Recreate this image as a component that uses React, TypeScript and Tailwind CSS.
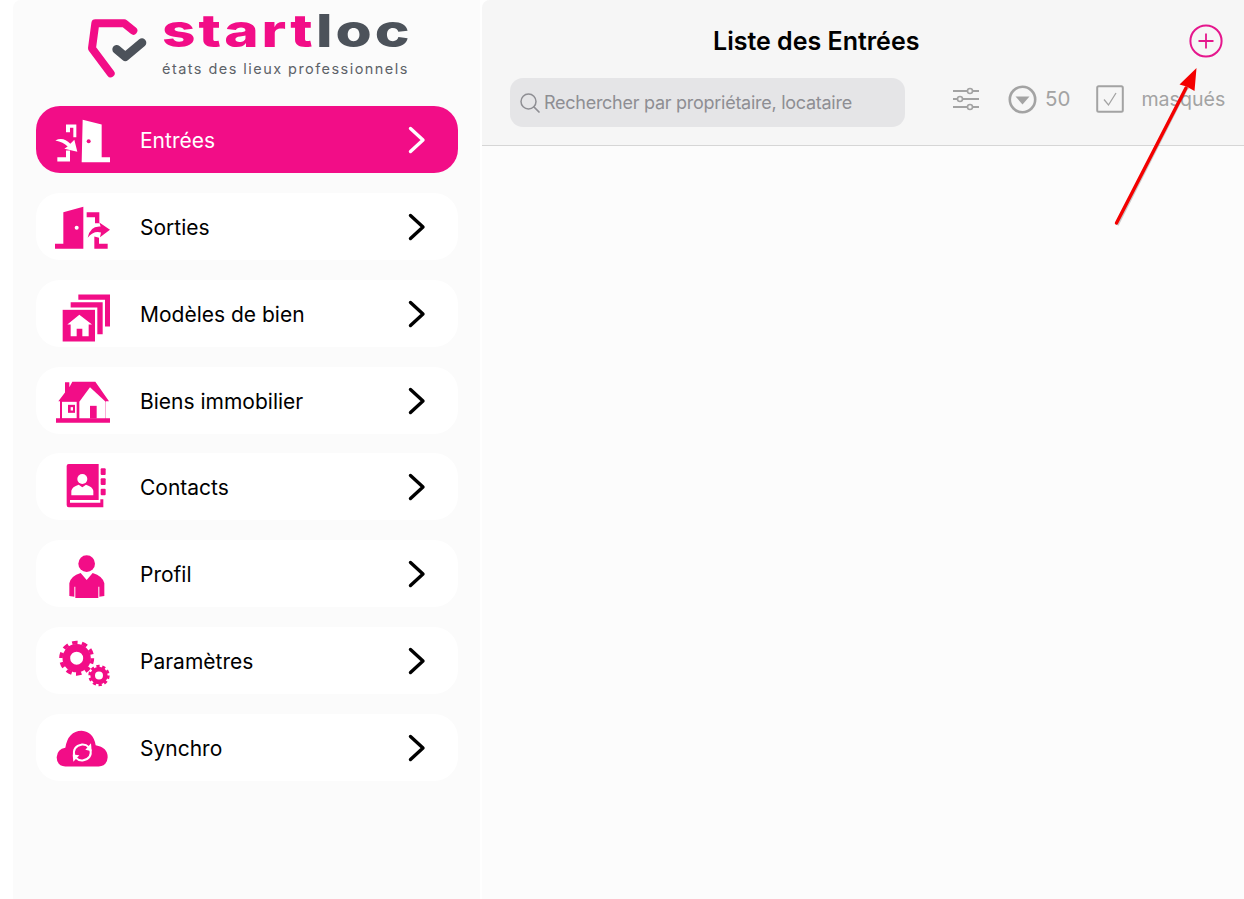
import React from "react";

const PINK = "#f20d87";

function Chevron({ color }: { color: string }) {
  return (
    <svg width="20" height="28" viewBox="0 0 20 28" fill="none" className="ml-auto mr-[31px] shrink-0">
      <path d="M3.5 2.5 L16 14 L3.5 25.5" stroke={color} strokeWidth="3.4" strokeLinecap="round" strokeLinejoin="round" />
    </svg>
  );
}

type IconProps = { cy: number; ox: number; oy: number; children: React.ReactNode };
function IconBox({ cy, ox, oy, children }: IconProps) {
  return (
    <svg width="60" height="60" viewBox={`52 ${cy - 30} 60 60`} className="shrink-0 ml-[16px] mr-[28px]">
      <g transform={`translate(${ox} ${oy}) scale(0.33333)`}>{children}</g>
    </svg>
  );
}

function EntreesIcon() {
  return (
    <IconBox cy={139.5} ox={0} oy={0}>
      <g fill="#fff">
        <path d="M248 358 L305 372 V470 H330 V485 H245 Z" />
        <path d="M198 372 H229 V410 H220 V382 H210 V395 H198 Z" />
        <path d="M172 470 H198 V450 H210 V483 H172 Z" />
        <path d="M166 420 Q190 408 211 430 L223 418 L232 454 L193 445 L203 438 Q190 425 166 420 Z" />
      </g>
      <circle cx="266" cy="422" r="6" fill={PINK} />
    </IconBox>
  );
}

function SortiesIcon() {
  return (
    <IconBox cy={226.5} ox={40} oy={190}>
      <g fill={PINK}>
        <path d="M70 65 L130 49 V175 H45 V160 H70 Z" />
        <path d="M140 65 H178 V98 H165 V80 H140 Z" />
        <path d="M163 138 L177 142 V160 H203 V175 H163 Z" />
        <path d="M143 142 Q150 105 182 108 L178 96 L210 118 L180 140 L183 126 Q160 120 143 142 Z" />
      </g>
      <circle cx="110" cy="112" r="6" fill="#fff" />
    </IconBox>
  );
}

function ModelesIcon() {
  return (
    <IconBox cy={313.5} ox={40} oy={190}>
      <g fill={PINK}>
        <path d="M115 312 H210 V408 H195 V328 H115 Z" />
        <path d="M92 335 H188 V431 H172 V351 H92 Z" />
        <rect x="68" y="358" width="97" height="95" />
      </g>
      <path d="M118 373 L156 402 H146 V437 H127 V415 H110 V437 H92 V402 H82 Z" fill="#fff" />
    </IconBox>
  );
}

function BiensIcon() {
  return (
    <IconBox cy={400.5} ox={40} oy={190}>
      <g fill={PINK}>
        <path d="M55 632 L75 606 V575 H88 V590 L97 574 H166 L207 632 H198 L198 683 H210 V697 H48 V683 H60 V632 Z" />
      </g>
      <path d="M66 634 H110 V683 H66 Z" fill="#fff" />
      <path d="M118 634 L150 590 L197 634 V683 H118 Z" fill="#fff" />
      <rect x="84" y="643" width="21" height="24" fill={PINK} />
      <rect x="92" y="650" width="7" height="10" fill="#fff" />
      <rect x="150" y="646" width="20" height="38" fill={PINK} />
    </IconBox>
  );
}

function ContactsIcon() {
  return (
    <IconBox cy={487} ox={40} oy={450}>
      <g fill={PINK}>
        <path d="M86 42 H176 V150 H90 V158 H181 V148 H190 V172 H86 Q80 172 80 165 V48 Q80 42 86 42 Z" />
        <rect x="182" y="55" width="15" height="20" rx="3" />
        <rect x="182" y="85" width="15" height="20" rx="3" />
        <rect x="182" y="116" width="15" height="20" rx="3" />
      </g>
      <circle cx="127" cy="87" r="15" fill="#fff" />
      <path d="M94 136 V122 Q96 110 116 104 L127 112 L138 104 Q158 110 160 122 V136 Z" fill="#fff" />
    </IconBox>
  );
}

function ProfilIcon() {
  return (
    <IconBox cy={574} ox={40} oy={540}>
      <g fill={PINK}>
        <circle cx="140" cy="71" r="25" />
        <path d="M88 168 V130 Q92 108 122 99 L140 120 L158 99 Q188 108 193 130 V168 L178 170 V140 H175 V174 H106 V140 H103 V170 Z" />
      </g>
    </IconBox>
  );
}

function GearsIcon() {
  return (
    <IconBox cy={660.5} ox={40} oy={450}>
      <g fill="none" stroke={PINK}>
        <circle cx="110" cy="623" r="31" strokeWidth="23" />
        <circle cx="110" cy="623" r="47" strokeWidth="11" strokeDasharray="16.4 13.1" />
        <circle cx="177" cy="675" r="19" strokeWidth="14" />
        <circle cx="177" cy="675" r="28" strokeWidth="8" strokeDasharray="9.8 7.8" />
      </g>
    </IconBox>
  );
}

function SynchroIcon() {
  return (
    <IconBox cy={747.5} ox={40} oy={450}>
      <path
        d="M76 948 Q50 946 50 920 Q52 896 76 892 Q84 842 125 841 Q160 844 167 884 Q203 890 203 920 Q202 946 176 948 Z"
        fill={PINK}
      />
      <g fill="none" stroke="#fff" strokeWidth="6">
        <path d="M103 916 Q96 888 126 882 Q138 881 146 890" />
        <path d="M151 896 Q158 924 128 930 Q116 931 108 922" />
      </g>
      <path d="M153 878 L155 902 L136 898 Z" fill="#fff" />
      <path d="M100 934 L98 912 L118 914 Z" fill="#fff" />
    </IconBox>
  );
}

const rows: { label: string; Icon: () => React.ReactElement; gap: string }[] = [
  { label: "Sorties", Icon: SortiesIcon, gap: "mt-[20px]" },
  { label: "Modèles de bien", Icon: ModelesIcon, gap: "mt-[20px]" },
  { label: "Biens immobilier", Icon: BiensIcon, gap: "mt-[20px]" },
  { label: "Contacts", Icon: ContactsIcon, gap: "mt-[19px]" },
  { label: "Profil", Icon: ProfilIcon, gap: "mt-[20px]" },
  { label: "Paramètres", Icon: GearsIcon, gap: "mt-[20px]" },
  { label: "Synchro", Icon: SynchroIcon, gap: "mt-[20px]" },
];

function Logo() {
  return (
    <div className="h-[106px] flex pl-[44px] pt-[10px]">
      <svg width="70" height="70" viewBox="80 10 70 70" className="shrink-0" fill="none">
        <g transform="translate(80 10) scale(0.33333)">
          <path d="M160 62 L133 40 H46 L36 115 L92 190" stroke={PINK} strokeWidth="24" strokeLinecap="round" strokeLinejoin="round" />
          <path d="M110 118 L136 140 L186 98" stroke="#4c525a" strokeWidth="26" strokeLinecap="round" strokeLinejoin="round" />
        </g>
      </svg>
      <div className="ml-[12px] flex flex-col font-['Inter',sans-serif]">
        <div className="text-[45px] leading-[44px] font-extrabold tracking-[2.3px] origin-left scale-x-[1.3] whitespace-nowrap -mt-[1px]">
          <span className="text-[#f20d87]">start</span>
          <span className="text-[#4c525a]">loc</span>
        </div>
        <div className="text-[14.5px] leading-[18px] text-[#5d6268] tracking-[1.45px] mt-[7px] whitespace-nowrap">
          états des lieux professionnels
        </div>
      </div>
    </div>
  );
}

export default function App() {
  return (
    <div className="w-[1244px] h-[899px] flex bg-white overflow-hidden relative font-['Inter',sans-serif]">
      <div className="w-[13px] shrink-0" />
      <aside className="w-[467px] shrink-0 bg-[#fbfbfb] rounded-tl-[8px] px-[23px]">
        <Logo />
        <div className="w-[422px]">
          <div className="h-[67px] rounded-[24px] bg-[#f20d87] flex items-center">
            <EntreesIcon />
            <span className="text-[21px] pt-[2px] text-white font-normal">Entrées</span>
            <Chevron color="#ffffff" />
          </div>
          {rows.map(({ label, Icon, gap }) => (
            <div key={label} className={`h-[67px] rounded-[24px] bg-white flex items-center ${gap}`}>
              <Icon />
              <span className="text-[21px] pt-[2px] text-black font-normal">{label}</span>
              <Chevron color="#000000" />
            </div>
          ))}
        </div>
      </aside>
      <div className="w-[2px] shrink-0" />
      <main className="flex-1 flex flex-col bg-[#fcfcfc] rounded-tl-[8px] overflow-hidden">
        <header className="h-[146px] shrink-0 bg-[#f6f6f6] border-b border-[#d6d6d6]">
          <div className="h-[78px] pt-[4px] flex items-center">
            <h1 className="ml-[231px] text-[25px] leading-[30px] font-semibold text-black whitespace-nowrap">Liste des Entrées</h1>
            <svg width="34" height="34" viewBox="0 0 34 34" fill="none" className="ml-auto mr-[21px]">
              <circle cx="17" cy="17" r="15.6" stroke="#e5178d" strokeWidth="2" />
              <path d="M17 9.5 V24.5 M9.5 17 H24.5" stroke="#e5178d" strokeWidth="1.8" />
            </svg>
          </div>
          <div className="flex items-center pl-[28px]">
            <div className="w-[395px] h-[49px] rounded-[13px] bg-[#e5e5e7] flex items-center pl-[9px]">
              <svg width="22" height="22" viewBox="0 0 22 22" fill="none" className="shrink-0">
                <circle cx="9.5" cy="9.5" r="7.5" stroke="#8e8e93" strokeWidth="1.5" />
                <path d="M15 15 L20 20" stroke="#8e8e93" strokeWidth="1.7" strokeLinecap="round" />
              </svg>
              <span className="ml-[3px] text-[18px] tracking-[-0.27px] text-[#8e8e93] whitespace-nowrap">Rechercher par propriétaire, locataire</span>
            </div>
            <div className="flex items-center mb-[7px] text-[#a3a3a3]">
              <svg width="26" height="24" viewBox="0 0 26 24" fill="none" className="ml-[48px]">
                <g stroke="#a3a3a3" strokeWidth="2">
                  <path d="M0 4 H26 M0 12 H26 M0 20 H26" />
                  <circle cx="17" cy="4" r="2.5" fill="#f6f6f6" strokeWidth="1.6" />
                  <circle cx="7" cy="12" r="2.5" fill="#f6f6f6" strokeWidth="1.6" />
                  <circle cx="17" cy="20" r="2.5" fill="#f6f6f6" strokeWidth="1.6" />
                </g>
              </svg>
              <svg width="29" height="29" viewBox="0 0 29 29" fill="none" className="ml-[29px]">
                <circle cx="14.5" cy="14.5" r="12.7" stroke="#a3a3a3" strokeWidth="2.6" />
                <path d="M7.5 11.5 H21.5 L14.5 19.5 Z" fill="#a3a3a3" />
              </svg>
              <span className="ml-[8px] text-[20.5px] leading-[26px]">50</span>
              <svg width="28" height="28" viewBox="0 0 28 28" fill="none" className="ml-[26px]">
                <rect x="1.2" y="1.2" width="25.6" height="25.6" rx="1.5" stroke="#a3a3a3" strokeWidth="2" />
                <path d="M8 14.5 L12.5 20 L20 8" stroke="#a3a3a3" strokeWidth="1.3" />
              </svg>
              <span className="ml-[17px] text-[19.6px] leading-[26px] whitespace-nowrap">masqués</span>
            </div>
          </div>
        </header>
      </main>
      <svg width="100" height="170" viewBox="1110 62 100 170" fill="none" className="absolute left-[1110px] top-[62px] pointer-events-none">
        <path d="M1117 225 L1186 89 M1186 89 L1188 87" stroke="#000" strokeOpacity="0.2" strokeWidth="3.5" />
        <path d="M1116.5 223 L1186 88" stroke="#f40000" strokeWidth="3.4" strokeLinecap="round" />
        <path d="M1196.5 68 L1194.5 91 L1186.5 86.5 L1179.5 84.5 Z" fill="#f40000" />
      </svg>
    </div>
  );
}
